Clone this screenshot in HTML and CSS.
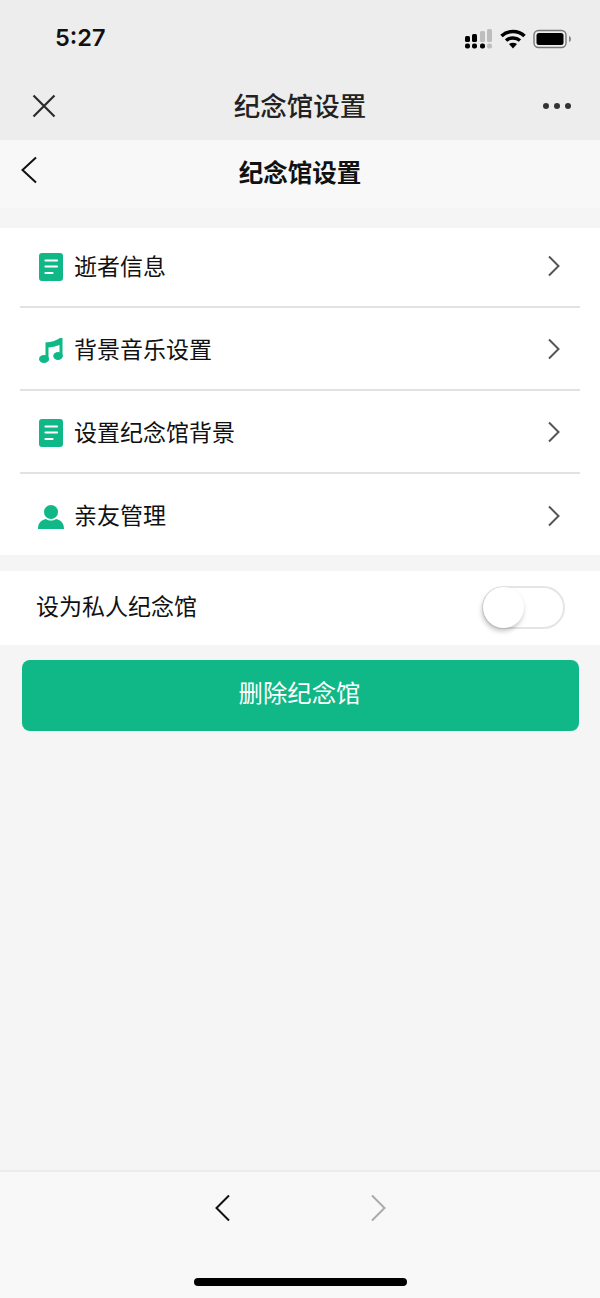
FILE: index.html
```html
<!DOCTYPE html>
<html lang="zh-CN">
<head>
<meta charset="utf-8">
<title>纪念馆设置</title>
<link rel="stylesheet" href="styles.css">
</head>
<body>
<div class="app">
  <header class="top">
    <div class="status">
      <span class="time">5:27</span>
      <div class="status-icons">
        <svg class="signal" width="28" height="20" viewBox="0 0 28 20">
          <rect x="0" y="7" width="5" height="6" rx="1.500" fill="#000"/>
          <rect x="7" y="5" width="5" height="8" rx="1.500" fill="#000"/>
          <rect x="15" y="2" width="5" height="11" rx="1.500" fill="#bdbdbd"/>
          <rect x="22" y="0" width="5" height="13" rx="1.500" fill="#bdbdbd"/>
          <rect x="0" y="14.500" width="5" height="5" rx="2" fill="#000"/>
          <rect x="7" y="14.500" width="5" height="5" rx="2" fill="#000"/>
          <rect x="15" y="14.500" width="5" height="5" rx="2" fill="#000"/>
          <rect x="22" y="14.500" width="5" height="5" rx="2" fill="#bdbdbd"/>
        </svg>
        <svg class="wifi" width="26" height="20" viewBox="0 0 26 20">
          <path d="M1.500 7C8 1 18 1 24.500 7" fill="none" stroke="#000" stroke-width="3.600"/>
          <path d="M6 11.500c4-3.400 10-3.400 14 0" fill="none" stroke="#000" stroke-width="3.400"/>
          <path d="M9 15c2.500-1.800 5.500-1.800 8 0l-4 4.500z" fill="#000"/>
        </svg>
        <svg class="battery" width="40" height="20" viewBox="0 0 40 20">
          <rect x="1" y="1.500" width="32" height="17" rx="4.500" fill="none" stroke="#777" stroke-width="1.400"/>
          <rect x="3.500" y="4" width="27" height="12" rx="2.500" fill="#000"/>
          <path d="M36 7c1.500.5 2 1.500 2 3s-.5 2.500-2 3z" fill="#888"/>
        </svg>
      </div>
    </div>
    <div class="wx-nav">
      <svg class="close" width="26" height="26" viewBox="0 0 26 26"><path d="M2.500 2.500l21 21M23.500 2.500l-21 21" stroke="#2b2b2b" stroke-width="2.200" fill="none"/></svg>
      <h1 class="wx-title">纪念馆设置</h1>
      <div class="dots"><i></i><i></i><i></i></div>
    </div>
  </header>

  <div class="page-head">
    <svg class="back" width="18" height="30" viewBox="0 0 18 30"><path d="M16 2.500L2.500 15 16 27.500" fill="none" stroke="#111" stroke-width="2"/></svg>
    <h2 class="page-title">纪念馆设置</h2>
  </div>

  <section class="list">
    <a class="row">
      <svg class="ico" width="26" height="28" viewBox="0 0 24 28"><rect width="24" height="28" rx="3" fill="#10b887"/><path d="M6.500 7.500h11.500M6.500 13.500h11.500M6.500 20h7" stroke="#fff" stroke-width="2.200" stroke-linecap="round"/></svg>
      <span class="label">逝者信息</span>
      <svg class="chev" width="12" height="22" viewBox="0 0 12 22"><path d="M1 1.500L10.500 11 1 20.500" fill="none" stroke="#555" stroke-width="2"/></svg>
    </a>
    <a class="row">
      <svg class="ico" width="26" height="28" viewBox="0 0 26 28"><path d="M7.500 25V6.500Q16 6 22 2h2.500V21h-3V9Q16 11 10.500 11.500V25z" fill="#10b887"/><ellipse cx="6" cy="23" rx="5" ry="4" fill="#10b887"/><ellipse cx="20" cy="20" rx="4.800" ry="4" fill="#10b887"/></svg>
      <span class="label">背景音乐设置</span>
      <svg class="chev" width="12" height="22" viewBox="0 0 12 22"><path d="M1 1.500L10.500 11 1 20.500" fill="none" stroke="#555" stroke-width="2"/></svg>
    </a>
    <a class="row">
      <svg class="ico" width="26" height="28" viewBox="0 0 24 28"><rect width="24" height="28" rx="3" fill="#10b887"/><path d="M6.500 7.500h11.500M6.500 13.500h11.500M6.500 20h7" stroke="#fff" stroke-width="2.200" stroke-linecap="round"/></svg>
      <span class="label">设置纪念馆背景</span>
      <svg class="chev" width="12" height="22" viewBox="0 0 12 22"><path d="M1 1.500L10.500 11 1 20.500" fill="none" stroke="#555" stroke-width="2"/></svg>
    </a>
    <a class="row">
      <svg class="ico" width="26" height="24" viewBox="0 0 26 24"><circle cx="13" cy="7" r="7" fill="#10b887"/><path d="M0 24c0-6 3-9 8-10 3 2 7 2 10 0 5 1 8 4 8 10z" fill="#10b887"/></svg>
      <span class="label">亲友管理</span>
      <svg class="chev" width="12" height="22" viewBox="0 0 12 22"><path d="M1 1.500L10.500 11 1 20.500" fill="none" stroke="#555" stroke-width="2"/></svg>
    </a>
  </section>

  <section class="private">
    <span class="label">设为私人纪念馆</span>
    <div class="switch"><span class="knob"></span></div>
  </section>

  <button class="delete">删除纪念馆</button>

  <footer class="bottom">
    <div class="arrows">
      <svg width="16" height="28" viewBox="0 0 16 28"><path d="M14 1.500L1.500 14 14 26.500" fill="none" stroke="#111" stroke-width="2"/></svg>
      <svg width="16" height="28" viewBox="0 0 16 28"><path d="M2 1.500L14.500 14 2 26.500" fill="none" stroke="#aaa" stroke-width="2"/></svg>
    </div>
    <div class="home"></div>
  </footer>
</div>
</body>
</html>
```

FILE: styles.css
```css
* { box-sizing: border-box; }
html, body { margin: 0; padding: 0; }
body {
  width: 600px;
  height: 1298px;
  overflow: hidden;
  background: #f5f5f5;
  font-family: "Noto Sans CJK SC", "Liberation Sans", sans-serif;
  color: #111;
}
.app { display: flex; flex-direction: column; height: 1298px; }

.top { height: 140px; background: #ededed; flex: none; }
.status {
  height: 75px;
  display: flex;
  justify-content: space-between;
  padding: 24px 27px 0 55px;
}
.time { font: 600 23.500px/28px Inter, "Liberation Sans", sans-serif; color: #111; }
.status-icons { display: flex; align-items: flex-start; gap: 7px; padding-top: 5px; }
.signal, .wifi, .battery { display: block; flex: none; }
.wx-nav {
  height: 65px;
  display: flex;
  align-items: center;
  justify-content: space-between;
  padding: 0 29px 4px 31px;
}
.wx-title { margin: 0 0 2px; font-size: 26.500px; line-height: 36px; font-weight: 500; color: #222; }
.dots { display: flex; gap: 5px; width: 28px; }
.dots i { width: 6px; height: 6px; border-radius: 50%; background: #333; display: block; }

.page-head {
  height: 68px;
  flex: none;
  background: #f8f8f8;
  display: flex;
  align-items: center;
  justify-content: center;
  padding-bottom: 4px;
  position: relative;
}
.back { position: absolute; left: 20px; top: 15px; }
.page-title { margin: 0; font-size: 24.500px; line-height: 34px; font-weight: 700; color: #111; }

.list {
  margin-top: 20px;
  background: #fff;
  padding: 0 20px;
  height: 327px;
  flex: none;
}
.row {
  height: 83px;
  display: flex;
  align-items: center;
  border-bottom: 2px solid #e2e2e2;
  padding: 3px 20px 0 18px;
}
.row:first-child { height: 80px; padding-top: 0; }
.row:last-child { border-bottom: 0; height: 81px; padding-top: 4px; }
.ico { flex: none; width: 26px; display: block; }
.label { font-size: 23px; line-height: 32px; color: #111; margin-bottom: 5px; }
.row .label { margin-left: 10px; flex: 1; }
.chev { flex: none; display: block; margin-bottom: 2px; }

.private {
  margin-top: 16px;
  height: 74px;
  flex: none;
  background: #fff;
  display: flex;
  align-items: center;
  justify-content: space-between;
  padding: 0 35px 0 36px;
}
.private .label { margin-bottom: 7px; }
.switch {
  width: 83px;
  height: 43px;
  margin-bottom: 2px;
  border: 2px solid #e5e5e5;
  border-radius: 22px;
  position: relative;
  background: #fff;
}
.knob {
  position: absolute;
  left: -1px;
  top: -1px;
  width: 41px;
  height: 41px;
  border-radius: 50%;
  background: #fff;
  box-shadow: -1px 3px 5px rgba(0, 0, 0, .24);
}

.delete {
  margin: 15px 21px 0 22px;
  height: 71px;
  flex: none;
  border: 0;
  border-radius: 8px;
  background: #10b887;
  color: #fff;
  font-family: inherit;
  font-size: 24.400px;
  font-weight: 400;
  padding: 0 2px 8px 0;
}

.bottom {
  margin-top: auto;
  height: 128px;
  flex: none;
  background: #f8f8f8;
  border-top: 2px solid #ececec;
  display: flex;
  flex-direction: column;
  align-items: center;
}
.arrows {
  margin-top: 22px;
  margin-left: 1px;
  display: flex;
  width: 171px;
  justify-content: space-between;
}
.arrows svg { display: block; }
.home {
  margin-top: 56px;
  margin-left: 1px;
  width: 213px;
  height: 8px;
  border-radius: 4px;
  background: #000;
}
```
